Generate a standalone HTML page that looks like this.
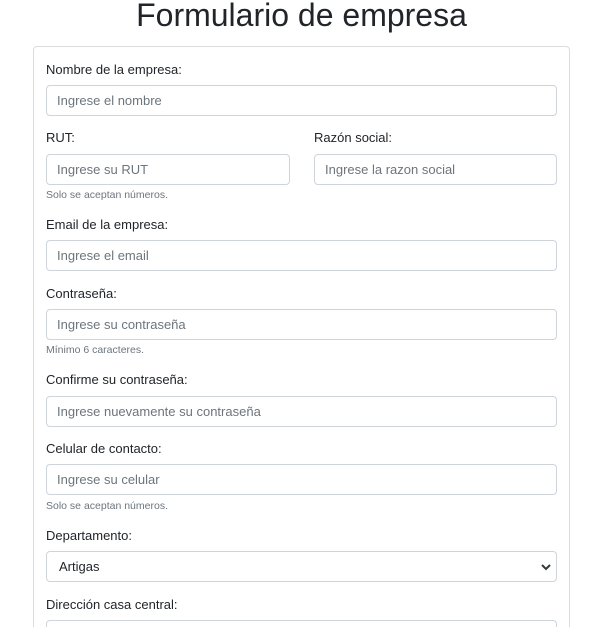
<!DOCTYPE html>
<html style="width:597px;height:627px;overflow:hidden"><head><meta charset="utf-8"><style>
*{box-sizing:border-box;margin:0;padding:0}
body{width:597px;height:627px;overflow:hidden;background:#fff;font-family:"Liberation Sans",sans-serif;color:#212529;position:relative}
h1{position:absolute;left:0;width:603px;top:-4px;text-align:center;font-weight:400;font-size:32px;line-height:38px}
.card{position:absolute;left:33px;top:46px;width:537px;height:600px;border:1px solid #dcdcdc;border-radius:4px}
.l{position:absolute;font-size:13px;line-height:16px}
.i{position:absolute;height:31px;border:1px solid #ced4da;border-radius:4px;font-size:13px;color:#6c757d;padding-left:10px;line-height:29px}
.s{position:absolute;font-size:10.5px;color:#6c757d;line-height:12px}
.sel{color:#212529}
</style></head><body>
<h1>Formulario de empresa</h1>
<div class="card"></div>
<div class="l" style="left:46px;top:62px">Nombre de la empresa:</div>
<div class="i" style="left:46px;top:85px;width:511px">Ingrese el nombre</div>
<div class="l" style="left:46px;top:130px">RUT:</div>
<div class="l" style="left:314px;top:130px">Razón social:</div>
<div class="i" style="left:46px;top:154px;width:244px">Ingrese su RUT</div>
<div class="i" style="left:314px;top:154px;width:243px">Ingrese la razon social</div>
<div class="s" style="left:46px;top:189px">Solo se aceptan números.</div>
<div class="l" style="left:46px;top:217px">Email de la empresa:</div>
<div class="i" style="left:46px;top:240px;width:511px">Ingrese el email</div>
<div class="l" style="left:46px;top:286px">Contraseña:</div>
<div class="i" style="left:46px;top:309px;width:511px">Ingrese su contraseña</div>
<div class="s" style="left:46px;top:344px">Mínimo 6 caracteres.</div>
<div class="l" style="left:46px;top:372px">Confirme su contraseña:</div>
<div class="i" style="left:46px;top:396px;width:511px">Ingrese nuevamente su contraseña</div>
<div class="l" style="left:46px;top:441px">Celular de contacto:</div>
<div class="i" style="left:46px;top:464px;width:511px">Ingrese su celular</div>
<div class="s" style="left:46px;top:500px">Solo se aceptan números.</div>
<div class="l" style="left:46px;top:528px">Departamento:</div>
<div class="i sel" style="left:46px;top:551px;width:511px;padding-left:12px">Artigas
<svg style="position:absolute;right:4px;top:10px" width="12" height="10" viewBox="0 0 12 10"><path d="M2 3l4 4 4-4" fill="none" stroke="#343a40" stroke-width="2"/></svg></div>
<div class="l" style="left:46px;top:597px">Dirección casa central:</div>
<div class="i" style="left:46px;top:620px;width:511px"></div>
</body></html>
